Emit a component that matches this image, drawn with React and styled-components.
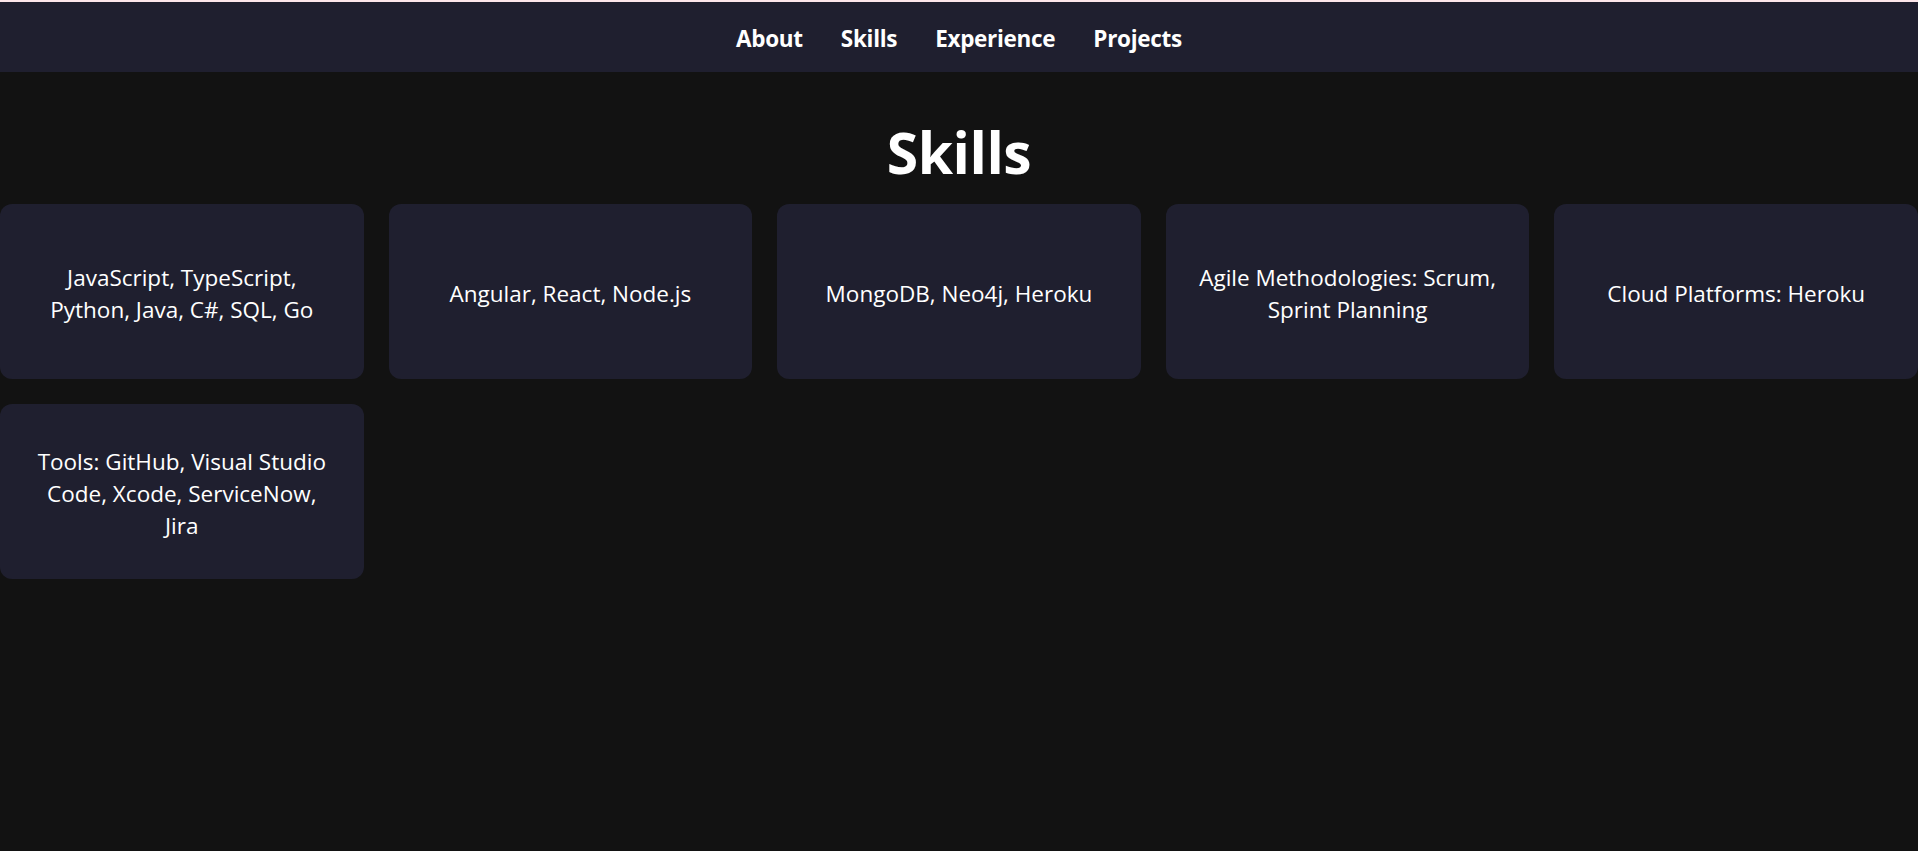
import React from 'react';
import styled, { createGlobalStyle } from 'styled-components';

const GlobalStyle = createGlobalStyle`
  html, body {
    margin: 0;
    padding: 0;
    background: #121212;
  }
  body {
    font-family: "Open Sans", "Noto Sans", sans-serif;
    color: #ffffff;
  }
`;

const Page = styled.div`
  min-height: 100vh;
  box-sizing: border-box;
  border-top: 2px solid #fde6ea;
  background: #121212;
`;

const NavBar = styled.nav`
  height: 70px;
  box-sizing: border-box;
  padding-top: 3px;
  background: #1f1f2f;
  display: flex;
  justify-content: center;
  align-items: center;
  gap: 38px;
`;

const NavLink = styled.a`
  color: #ffffff;
  text-decoration: none;
  font-size: 22.5px;
  font-weight: 700;
  letter-spacing: -0.3px;
  cursor: pointer;
`;

const Section = styled.section`
  padding-top: 36px;
`;

const Title = styled.h2`
  margin: 0 0 8px;
  text-align: center;
  font-size: 57px;
  font-weight: 700;
  line-height: 88px;
  letter-spacing: -0.5px;
`;

const Grid = styled.div`
  display: grid;
  grid-template-columns: repeat(5, 1fr);
  gap: 25px;
`;

const Card = styled.div`
  height: 175px;
  box-sizing: border-box;
  padding: 5px 30px 0;
  background: #1f1f2f;
  border-radius: 12px;
  display: flex;
  align-items: center;
  justify-content: center;
  text-align: center;
  font-size: 22.5px;
  line-height: 32px;
`;

const links = ['About', 'Skills', 'Experience', 'Projects'];

const skills = [
  'JavaScript, TypeScript, Python, Java, C#, SQL, Go',
  'Angular, React, Node.js',
  'MongoDB, Neo4j, Heroku',
  'Agile Methodologies: Scrum, Sprint Planning',
  'Cloud Platforms: Heroku',
  'Tools: GitHub, Visual Studio Code, Xcode, ServiceNow, Jira',
];

export default function App() {
  return (
    <>
      <GlobalStyle />
      <Page>
        <NavBar>
          {links.map((l) => (
            <NavLink key={l}>{l}</NavLink>
          ))}
        </NavBar>
        <Section>
          <Title>Skills</Title>
          <Grid>
            {skills.map((s) => (
              <Card key={s}>{s}</Card>
            ))}
          </Grid>
        </Section>
      </Page>
    </>
  );
}
